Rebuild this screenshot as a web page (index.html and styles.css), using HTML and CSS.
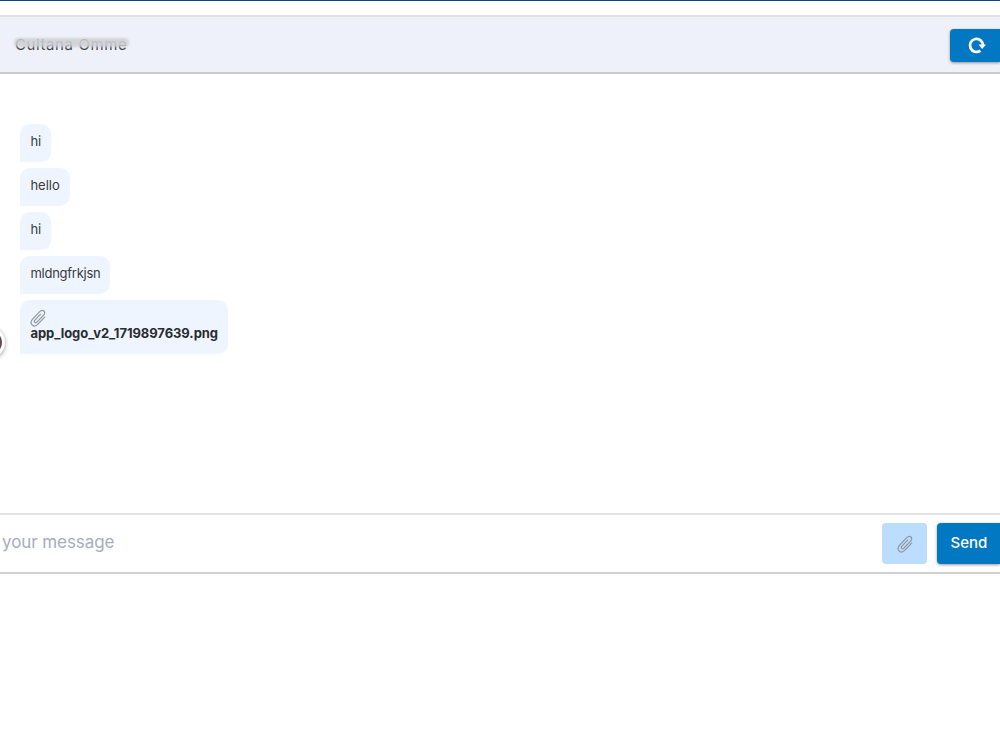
FILE: index.html
```html
<!DOCTYPE html>
<html lang="en">
<head>
  <meta charset="UTF-8" />
  <meta name="viewport" content="width=device-width, initial-scale=1.0" />
  <title>Chat</title>
  <link rel="stylesheet" href="styles.css">
</head>
<body>
  <div class="chat">
    <header class="chat-header">
      <div class="chat-name"><span>Cultana Omme</span></div>
      <button class="btn refresh" aria-label="Refresh">
        <svg width="20" height="20" viewBox="0 0 20 20" fill="none">
          <path d="M13.4 14.6A6.5 6.5 0 1 1 16 9.500" stroke="#fff" stroke-width="2.7" />
          <path d="M11.500 8.500h7.500l-3.800 4.500z" fill="#fff" />
        </svg>
      </button>
    </header>

    <main class="messages">
      <div class="message"><span class="w-hi">hi</span></div>
      <div class="message"><span class="w-hello">hello</span></div>
      <div class="message"><span class="w-hi">hi</span></div>
      <div class="message"><span class="w-text">mldngfrkjsn</span></div>
      <div class="message file">
        <svg class="clip" viewBox="0 0 16 18" fill="none">
          <path d="M10.6 5.1 4.9 11.2c-1.5 1.7.5 3.5 2 2l6.7-7.1c3-3.3-.8-6.6-3.9-3.4L2.6 10.2c-4 4.5 1.2 9.3 5.3 5l6.7-7" />
        </svg>
        <strong>app_logo_v2_1719897639.png</strong>
      </div>
      <span class="avatar"></span>
    </main>

    <form class="composer">
      <input type="text" placeholder="your message" />
      <button type="button" class="attach" aria-label="Attach">
        <svg class="clip" viewBox="0 0 16 18" fill="none">
          <path d="M10.6 5.1 4.9 11.2c-1.5 1.7.5 3.5 2 2l6.7-7.1c3-3.3-.8-6.6-3.9-3.4L2.6 10.2c-4 4.5 1.2 9.3 5.3 5l6.7-7" />
        </svg>
      </button>
      <button type="button" class="btn send">Send</button>
    </form>
  </div>
</body>
</html>
```
FILE: styles.css
```css
* { box-sizing: border-box; }

body {
  margin: 0;
  height: 750px;
  overflow: hidden;
  font-family: Inter, "Liberation Sans", sans-serif;
  background: #fff;
  color: #3a3b3e;
  border-top: 1px solid #0c4687;
}

.chat {
  padding-top: 14px;
}

.chat-header {
  display: flex;
  justify-content: space-between;
  align-items: flex-start;
  height: 59px;
  padding: 13px 0 0 15px;
  background: #eef1f9;
  border-top: 2px solid #dfe1e5;
  border-bottom: 2px solid #c8cacf;
}

.chat-name {
  position: relative;
  height: 30px;
  font-size: 15px;
  line-height: 30px;
  letter-spacing: 0.6px;
  color: #3f4247;
}

/* smudge over the contact name */
.chat-name::after {
  content: "";
  position: absolute;
  left: -1px;
  right: -2px;
  top: 8px;
  height: 9px;
  border-radius: 5px;
  background: #cfd1d6;
  opacity: 0.88;
  filter: blur(1px);
}

.btn {
  border: none;
  background: #0278c2;
  color: #fff;
  font-family: inherit;
  box-shadow: 0 1px 3px rgba(0,0,0,0.4);
}

.refresh {
  display: flex;
  align-items: center;
  width: 50px;
  height: 33px;
  margin-top: -1px;
  padding: 0 0 0 17px;
  border-radius: 4px 0 0 4px;
}

.messages {
  position: relative;
  display: flex;
  flex-direction: column;
  align-items: flex-start;
  gap: 6px;
  height: 439px;
  padding: 50px 0 0 20.400px;
}

.message {
  height: 38px;
  padding: 7px 10px 9px;
  border-radius: 10px 10px 10px 0;
  background: #eef5ff;
  font-size: 13px;
  line-height: 20px;
}

.message span {
  display: block;
  white-space: nowrap;
}

.w-hi { width: 11px; }
.w-hello { width: 30px; }
.w-text { width: 70px; letter-spacing: -0.25px; }

.file {
  width: 208px;
  height: 54px;
  padding-top: 9px;
}

.file strong {
  display: block;
  margin-top: -1px;
  line-height: 15px;
  color: #2b2c2f;
  letter-spacing: -0.06px;
  white-space: nowrap;
}

.clip {
  display: block;
  width: 16px;
  height: 18px;
  stroke: #92969d;
  stroke-width: 1.2;
  stroke-linecap: round;
}

.avatar {
  position: absolute;
  left: -26px;
  top: 253px;
  width: 31px;
  height: 31px;
  border: 3px solid #fff;
  border-radius: 50%;
  background: #66484a;
  box-shadow: 0 1px 4px rgba(0,0,0,0.4);
}

.composer {
  display: flex;
  align-items: flex-start;
  height: 61px;
  padding-top: 8px;
  border-top: 2px solid #e3e4e6;
  border-bottom: 2px solid #cfd0d2;
}

.composer input {
  flex: 1;
  min-width: 0;
  height: 37px;
  padding: 0 0 0 2px;
  border: none;
  outline: none;
  background: transparent;
  font: 17px Inter, "Liberation Sans", sans-serif;
  letter-spacing: -0.08px;
}

.composer input::placeholder {
  color: #a6aeba;
}

.attach {
  display: flex;
  justify-content: center;
  align-items: center;
  width: 45px;
  height: 41px;
  margin-right: 10px;
  padding: 0;
  border: none;
  border-radius: 4px;
  background: #bbdefe;
}

.send {
  width: 63px;
  height: 41px;
  padding: 0 0 3px 1px;
  border-radius: 4px 0 0 4px;
  font-size: 15px;
  font-weight: 500;
}
```
